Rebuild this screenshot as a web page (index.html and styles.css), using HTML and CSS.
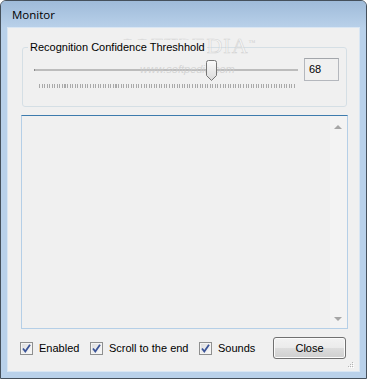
FILE: index.html
```html
<!DOCTYPE html>
<html lang="en">
<head>
    <meta charset="UTF-8">
    <title>Monitor</title>
    <link rel="stylesheet" href="styles.css">
</head>
<body>
    <div class="window">
        <div class="titlebar">Monitor</div>
        <div class="client">
            <div class="watermark">SOFTPEDIA<sup>™</sup></div>
            <div class="watermark-url">www.softpedia.com</div>

            <fieldset class="group">
                <legend>Recognition Confidence Threshhold</legend>
                <div class="slider-row">
                    <div class="slider">
                        <div class="slider-rail">
                            <div class="track"></div>
                            <svg class="thumb" width="11" height="21" viewBox="0 0 11 21">
                                <defs>
                                    <linearGradient id="thumb-fill" x1="0" y1="0" x2="0" y2="1">
                                        <stop offset="0" stop-color="#fbfbfb"/>
                                        <stop offset="1" stop-color="#d9d9d9"/>
                                    </linearGradient>
                                </defs>
                                <path d="M0.5 2.5 Q0.5 0.5 2.5 0.5 H8.5 Q10.5 0.5 10.5 2.5 V15.5 L5.5 20.5 L0.5 15.5 Z" fill="url(#thumb-fill)" stroke="#767676"/>
                            </svg>
                        </div>
                        <div class="ticks"></div>
                    </div>
                    <div class="value-box">68</div>
                </div>
            </fieldset>

            <div class="log">
                <div class="scrollbar">
                    <span class="arrow arrow-up"></span>
                    <span class="arrow arrow-down"></span>
                </div>
            </div>

            <div class="footer">
                <label class="check check-enabled">
                    <span class="box"><svg width="11" height="11" viewBox="0 0 11 11"><path d="M2 5.5 L4.3 8.5 L9 1.8" fill="none" stroke="#3b5498" stroke-width="1.8"/></svg></span>
                    Enabled
                </label>
                <label class="check check-scroll">
                    <span class="box"><svg width="11" height="11" viewBox="0 0 11 11"><path d="M2 5.5 L4.3 8.5 L9 1.8" fill="none" stroke="#3b5498" stroke-width="1.8"/></svg></span>
                    Scroll to the end
                </label>
                <label class="check">
                    <span class="box"><svg width="11" height="11" viewBox="0 0 11 11"><path d="M2 5.5 L4.3 8.5 L9 1.8" fill="none" stroke="#3b5498" stroke-width="1.8"/></svg></span>
                    Sounds
                </label>
                <button class="close-btn">Close</button>
            </div>

            <svg class="grip" width="7" height="7" viewBox="0 0 7 7">
                <rect x="4" y="0" width="1" height="1" fill="#b4b4b4"/>
                <rect x="2" y="2" width="1" height="1" fill="#b4b4b4"/>
                <rect x="4" y="2" width="1" height="1" fill="#b4b4b4"/>
                <rect x="0" y="4" width="1" height="1" fill="#b4b4b4"/>
                <rect x="2" y="4" width="1" height="1" fill="#b4b4b4"/>
                <rect x="4" y="4" width="1" height="1" fill="#b4b4b4"/>
                <rect x="5" y="1" width="1" height="1" fill="#fff"/>
                <rect x="3" y="3" width="1" height="1" fill="#fff"/>
                <rect x="5" y="3" width="1" height="1" fill="#fff"/>
                <rect x="1" y="5" width="1" height="1" fill="#fff"/>
                <rect x="3" y="5" width="1" height="1" fill="#fff"/>
                <rect x="5" y="5" width="1" height="1" fill="#fff"/>
            </svg>
        </div>
    </div>
</body>
</html>
```

FILE: styles.css
```css
body {
    margin: 0;
    background: #ffffff;
    font-family: 'Liberation Sans', Arial, sans-serif;
    font-size: 11px;
    color: #000;
}
.window {
    position: relative;
    width: 367px;
    height: 379px;
    box-sizing: border-box;
    border: 1px solid #45505b;
    border-radius: 6px 6px 0 0;
    background: #b9d1ea;
    padding: 0 7px 7px;
    overflow: hidden;
}
.titlebar {
    height: 27px;
    margin: 0 -7px;
    padding: 6px 0 0 11px;
    box-sizing: border-box;
    background: linear-gradient(#9fbbd9, #b9d1ea);
    font-family: 'Open Sans', 'DejaVu Sans', sans-serif;
    font-size: 11.5px;
    line-height: 16px;
}
.client {
    position: relative;
    height: 343px;
    box-sizing: border-box;
    background: #f0f0f0;
    box-shadow: 0 0 0 1px #d9e6f3;
    padding: 12px 11px 12px 13px;
    display: flex;
    flex-direction: column;
    gap: 8px;
}
.group {
    margin: 0 1px;
    padding: 4px 7px 18px 11px;
    border: 1px solid #d5dfe5;
    border-radius: 3px;
    min-width: 0;
}
.group legend {
    position: relative;
    z-index: 2;
    margin-left: -6px;
    padding: 0 2px;
    line-height: 14px;
    background: #f0f0f0;
}
.slider-row {
    display: flex;
    gap: 6px;
    align-items: flex-start;
}
.slider {
    width: 264px;
}
.slider-rail {
    position: relative;
    height: 23px;
}
.track {
    position: absolute;
    left: 0;
    right: 0;
    top: 11px;
    height: 2px;
    background: #bcbcbc;
    border-left: 1px solid #8c8c8c;
    box-sizing: border-box;
}
.thumb {
    position: absolute;
    z-index: 2;
    left: 172px;
    top: 2px;
}
.ticks {
    margin: 3px 0 0 5px;
    width: 257px;
    height: 4px;
    background: repeating-linear-gradient(to right, #a9a9a9 0 1px, transparent 1px 2.55px);
}
.value-box {
    width: 35px;
    height: 23px;
    box-sizing: border-box;
    border: 1px solid #b4b7bd;
    border-top-color: #a3a6ab;
    background: #f0f0f0;
    padding: 4px 0 0 4px;
    line-height: 13px;
}
.log {
    flex: 1;
    position: relative;
    border: 1px solid #b5cfe7;
    border-top-color: #3d7bad;
    background: #f0f0f0;
}
.scrollbar {
    position: absolute;
    top: 0;
    right: 0;
    bottom: 0;
    width: 17px;
    background: #f3f3f3;
}
.arrow {
    position: absolute;
    left: 4px;
    width: 0;
    height: 0;
    border-left: 4px solid transparent;
    border-right: 4px solid transparent;
}
.arrow-up {
    top: 9px;
    border-bottom: 4px solid #a6a6a6;
}
.arrow-down {
    bottom: 7px;
    border-top: 4px solid #a6a6a6;
}
.footer {
    height: 22px;
    display: flex;
    align-items: center;
    padding-right: 2px;
}
.check {
    display: flex;
    align-items: center;
    gap: 6px;
    margin-left: -1px;
    margin-right: 14px;
    line-height: 13px;
}
.check-enabled {
    width: 71px;
    margin-right: 0;
}
.check-scroll {
    width: 110px;
    margin-right: 0;
}
.box {
    width: 13px;
    height: 13px;
    box-sizing: border-box;
    border: 1px solid #8e8f8f;
    background: linear-gradient(135deg, #dcdcdc, #fbfbfb);
    box-shadow: inset 0 0 0 1px #f4f4f4;
    display: flex;
    align-items: center;
    justify-content: center;
}
.close-btn {
    margin-left: auto;
    width: 73px;
    height: 22px;
    border: 1px solid #707070;
    border-radius: 3px;
    background: linear-gradient(#f2f2f2 0%, #ebebeb 50%, #dddddd 50%, #cfcfcf 100%);
    box-shadow: inset 0 0 0 1px #fbfbfb;
    font-family: 'Liberation Sans', Arial, sans-serif;
    font-size: 11px;
    color: #000;
    padding: 0;
}
.grip {
    position: absolute;
    right: 4px;
    bottom: 2px;
}
.watermark {
    position: absolute;
    z-index: 1;
    left: 113px;
    top: 5px;
    font-family: 'Liberation Serif', serif;
    font-size: 22px;
    letter-spacing: 1px;
    color: rgba(255, 255, 255, 0.35);
    -webkit-text-stroke: 0.6px rgba(200, 200, 200, 0.7);
    pointer-events: none;
}
.watermark sup {
    font-size: 7px;
    -webkit-text-stroke: 0;
    color: #d0d0d0;
}
.watermark-url {
    position: absolute;
    z-index: 1;
    left: 132px;
    top: 35px;
    font-style: italic;
    color: rgba(205, 205, 205, 0.8);
    pointer-events: none;
}
```
